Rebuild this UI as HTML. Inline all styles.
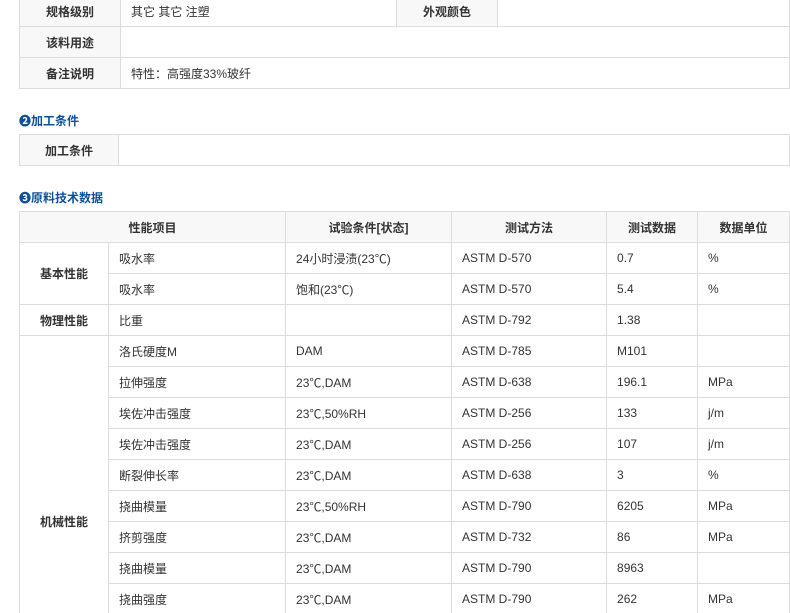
<!DOCTYPE html>
<html style="overflow:hidden"><head><meta charset="utf-8"><style>
body{margin:0;background:#fff;font-family:"Liberation Sans","Noto Sans CJK SC","WenQuanYi Zen Hei",sans-serif;font-size:12px;color:#333;width:790px;height:613px;overflow:hidden;position:relative}
table{border-collapse:collapse;table-layout:fixed;position:absolute;left:19px}
td,th{border:1px solid #dcdcdc;height:30px;padding:0 0 0 10px;text-align:left;white-space:nowrap;overflow:hidden;font-weight:normal}
th{background:#f8f8f8;font-weight:bold;text-align:center;padding:0;color:#333}
.h{position:absolute;left:19px;color:#0f4f97;font-weight:bold;font-size:12px}
</style></head><body>
<table style="top:-5px;width:770px">
<col style="width:101px"><col style="width:276px"><col style="width:101px"><col style="width:292px">
<tr><th>规格级别</th><td>其它 其它 注塑</td><th>外观颜色</th><td></td></tr>
<tr><th>该料用途</th><td colspan="3"></td></tr>
<tr><th>备注说明</th><td colspan="3">特性：高强度33%玻纤</td></tr>
</table>
<div class="h" style="top:112px">❷加工条件</div>
<table style="top:134px;width:770px">
<col style="width:99px"><col style="width:671px">
<tr><th>加工条件</th><td></td></tr>
</table>
<div class="h" style="top:189px">❸原料技术数据</div>
<table style="top:211px;width:770px">
<col style="width:89px"><col style="width:177px"><col style="width:166px"><col style="width:155px"><col style="width:91px"><col style="width:92px">
<tr><th colspan="2">性能项目</th><th>试验条件[状态]</th><th>测试方法</th><th>测试数据</th><th>数据单位</th></tr>
<tr><th rowspan="2" style="background:#fff">基本性能</th><td>吸水率</td><td>24小时浸渍(23℃)</td><td>ASTM D-570</td><td>0.7</td><td>%</td></tr>
<tr><td>吸水率</td><td>饱和(23℃)</td><td>ASTM D-570</td><td>5.4</td><td>%</td></tr>
<tr><th style="background:#fff">物理性能</th><td>比重</td><td></td><td>ASTM D-792</td><td>1.38</td><td></td></tr>
<tr><th rowspan="12" style="background:#fff">机械性能</th><td>洛氏硬度M</td><td>DAM</td><td>ASTM D-785</td><td>M101</td><td></td></tr>
<tr><td>拉伸强度</td><td>23℃,DAM</td><td>ASTM D-638</td><td>196.1</td><td>MPa</td></tr>
<tr><td>埃佐冲击强度</td><td>23℃,50%RH</td><td>ASTM D-256</td><td>133</td><td>j/m</td></tr>
<tr><td>埃佐冲击强度</td><td>23℃,DAM</td><td>ASTM D-256</td><td>107</td><td>j/m</td></tr>
<tr><td>断裂伸长率</td><td>23℃,DAM</td><td>ASTM D-638</td><td>3</td><td>%</td></tr>
<tr><td>挠曲模量</td><td>23℃,50%RH</td><td>ASTM D-790</td><td>6205</td><td>MPa</td></tr>
<tr><td>挤剪强度</td><td>23℃,DAM</td><td>ASTM D-732</td><td>86</td><td>MPa</td></tr>
<tr><td>挠曲模量</td><td>23℃,DAM</td><td>ASTM D-790</td><td>8963</td><td></td></tr>
<tr><td>挠曲强度</td><td>23℃,DAM</td><td>ASTM D-790</td><td>262</td><td>MPa</td></tr>
<tr><td>拉伸强度</td><td>23℃,DAM</td><td>ASTM D-638</td><td>193</td><td>MPa</td></tr>
<tr><td>挠曲强度</td><td>23℃,50%RH</td><td>ASTM D-790</td><td>200</td><td>MPa</td></tr>
<tr><td>断裂伸长率</td><td>23℃,50%RH</td><td>ASTM D-638</td><td>4</td><td>%</td></tr>
</table>
</body></html>
